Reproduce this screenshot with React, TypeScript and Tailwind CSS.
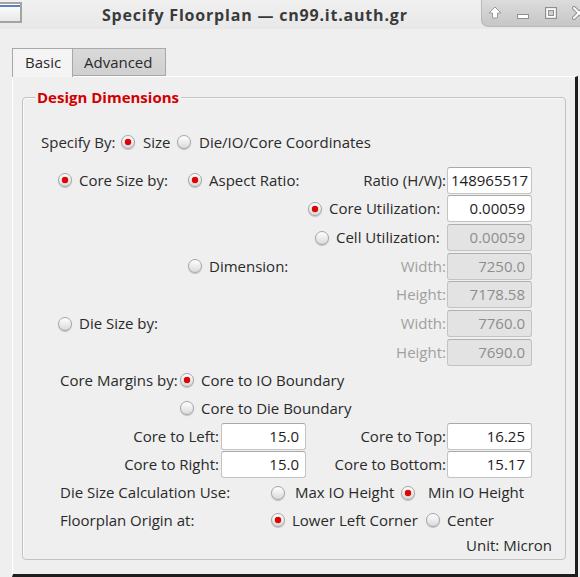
import React from "react";

const Radio = ({ checked = false }: { checked?: boolean }) => (
  <span className="shrink-0 w-[14px] h-[14px] rounded-full border border-[#a5a5a5] bg-gradient-to-b from-[#ffffff] to-[#dadada] shadow-[0_1px_1px_rgba(0,0,0,0.2)] flex items-center justify-center">
    {checked && <span className="w-[6px] h-[6px] rounded-full bg-[#e30000] shadow-[0_0_1px_#900]" />}
  </span>
);

const Input = ({ value, disabled = false }: { value: string; disabled?: boolean }) => (
  <div
    className={
      disabled
        ? "shrink-0 w-[85px] h-[27px] rounded-[3px] border border-[#c3c3c3] border-t-[#b0b0b0] bg-[#e3e3e3] text-[#8e8e8e] text-right pr-[6px] leading-[25px] overflow-hidden whitespace-nowrap"
        : "shrink-0 w-[85px] h-[27px] rounded-[3px] border border-[#c3c3c3] border-t-[#a8a8a8] bg-white text-[#1e1e1e] text-right pr-[6px] leading-[25px] overflow-hidden whitespace-nowrap"
    }
  >
    {value}
  </div>
);

const Row = ({ className = "", children }: { className?: string; children: React.ReactNode }) => (
  <div className={"flex items-center whitespace-nowrap " + className}>{children}</div>
);

export default function App() {
  return (
    <div className="w-[580px] h-[577px] bg-[#efefef] overflow-hidden flex flex-col text-[15px] text-[#2a2a2a] font-['Open_Sans','Noto_Sans',sans-serif]">
      {/* Title bar */}
      <div className="h-[29px] shrink-0 flex items-start bg-gradient-to-b from-[#f0f0f0] to-[#e8e8e8]">
        <div className="mt-[2px] w-[22px] h-[21px] border-[2px] border-[#a3a3a3] border-l-0 bg-gradient-to-b from-[#ffffff] to-[#e8e8e8] flex flex-col">
          <div className="mt-[1px] h-[2px] bg-[#5b80c6]" />
        </div>
        <div className="ml-[80px] mt-[3px] font-bold text-[16px] text-[#3a3a3a] tracking-[0.8px] whitespace-nowrap">
          Specify Floorplan — cn99.it.auth.gr
        </div>
        <div className="flex-1" />
        <div className="w-[99px] h-[27px] shrink-0 rounded-bl-[7px] border-l border-b border-[#b9b9b9] bg-gradient-to-b from-[#dcdcdc] to-[#c6c6c6] flex items-center pl-[6px] gap-[14px]">
          <svg className="shrink-0" width="14" height="14" viewBox="0 0 14 14">
            <path d="M7 1 L13 7 L9.5 7 L9.5 12 L4.5 12 L4.5 7 L1 7 Z" fill="#ffffff" stroke="#9a9a9a" strokeWidth="1" />
          </svg>
          <svg className="shrink-0" width="14" height="14" viewBox="0 0 14 14">
            <rect x="1.5" y="8.5" width="11" height="4" fill="#ffffff" stroke="#8f8f8f" strokeWidth="1" />
          </svg>
          <svg className="shrink-0" width="14" height="14" viewBox="0 0 14 14">
            <rect x="1.5" y="1.5" width="11" height="11" fill="none" stroke="#8f8f8f" strokeWidth="1" />
            <rect x="3.5" y="3.5" width="7" height="7" fill="none" stroke="#ffffff" strokeWidth="2" />
            <rect x="4.5" y="4.5" width="5" height="5" fill="none" stroke="#8f8f8f" strokeWidth="1" />
          </svg>
          <svg className="shrink-0" width="14" height="14" viewBox="0 0 14 14">
            <path d="M2 2 L12 12 M12 2 L2 12" stroke="#8f8f8f" strokeWidth="4" strokeLinecap="round" />
            <path d="M2 2 L12 12 M12 2 L2 12" stroke="#ffffff" strokeWidth="2" strokeLinecap="round" />
          </svg>
        </div>
      </div>

      {/* Tabs */}
      <div className="pl-[12px] pt-[19px] flex items-end h-[47px] shrink-0">
        <div className="h-[29px] w-[61px] border border-b-0 border-[#a8a8a8] bg-[#f4f4f4] pl-[12px] leading-[27px] relative z-10 mb-[-1px]">
          Basic
        </div>
        <div className="h-[28px] w-[93px] border border-l-0 border-[#a8a8a8] bg-gradient-to-b from-[#d9d9d9] to-[#d0d0d0] pl-[11px] leading-[27px]">
          Advanced
        </div>
      </div>

      {/* Panel */}
      <div className="ml-[12px] mr-[2px] flex-1 border-l border-t border-l-white border-t-white border-r-[3px] border-b-[3px] border-r-[#1e1e1e] border-b-[#1e1e1e] pl-[9px] pr-[9px] pt-[20px] pb-[14px] flex flex-col">
        <div className="relative flex-1 rounded-[4px] border border-[#c2c2c2] shadow-[inset_1px_1px_0_#fafafa] pt-[30px] flex flex-col">
          <span className="absolute left-[12px] top-[-11px] px-[2px] bg-[#efefef] text-[#d20000] font-bold text-[15px] leading-[20px]">
            Design Dimensions
          </span>

          {/* Specify By */}
          <Row className="h-[28px] pl-[18px]">
            <span className="w-[80px] shrink-0">Specify By:</span>
            <Radio checked />
            <span className="ml-[8px] w-[34px] shrink-0">Size</span>
            <Radio />
            <span className="ml-[8px]">Die/IO/Core Coordinates</span>
          </Row>

          {/* Core size by */}
          <Row className="h-[28px] mt-[10px] pl-[35px] pr-[33px]">
            <Radio checked />
            <span className="ml-[7px] w-[109px] shrink-0">Core Size by:</span>
            <Radio checked />
            <span className="ml-[7px]">Aspect Ratio:</span>
            <span className="flex-1" />
            <span className="mr-[1px]">Ratio (H/W):</span>
            <div className="shrink-0 w-[85px] h-[27px] rounded-[3px] border border-[#c3c3c3] border-t-[#a8a8a8] bg-white text-[#1e1e1e] pl-[3px] leading-[25px] overflow-hidden whitespace-nowrap">
              148965517
            </div>
          </Row>

          <Row className="h-[29px] pl-[285px] pr-[33px]">
            <Radio checked />
            <span className="ml-[7px]">Core Utilization:</span>
            <span className="flex-1" />
            <Input value="0.00059" />
          </Row>

          <Row className="h-[29px] pl-[292px] pr-[33px]">
            <Radio />
            <span className="ml-[7px]">Cell Utilization:</span>
            <span className="flex-1" />
            <Input value="0.00059" disabled />
          </Row>

          <Row className="h-[28px] pl-[165px] pr-[33px]">
            <Radio />
            <span className="ml-[7px]">Dimension:</span>
            <span className="flex-1" />
            <span className="mr-[1px] text-[#a0a0a0]">Width:</span>
            <Input value="7250.0" disabled />
          </Row>

          <Row className="h-[29px] pr-[33px]">
            <span className="flex-1" />
            <span className="mr-[1px] text-[#a0a0a0]">Height:</span>
            <Input value="7178.58" disabled />
          </Row>

          <Row className="h-[29px] pl-[35px] pr-[33px]">
            <Radio />
            <span className="ml-[7px]">Die Size by:</span>
            <span className="flex-1" />
            <span className="mr-[1px] text-[#a0a0a0]">Width:</span>
            <Input value="7760.0" disabled />
          </Row>

          <Row className="h-[28px] pr-[33px]">
            <span className="flex-1" />
            <span className="mr-[1px] text-[#a0a0a0]">Height:</span>
            <Input value="7690.0" disabled />
          </Row>

          <Row className="h-[28px] pl-[37px]">
            <span className="w-[120px] shrink-0">Core Margins by:</span>
            <Radio checked />
            <span className="ml-[7px]">Core to IO Boundary</span>
          </Row>

          <Row className="h-[28px] pl-[157px]">
            <Radio />
            <span className="ml-[7px]">Core to Die Boundary</span>
          </Row>

          <Row className="h-[28px] pr-[33px]">
            <span className="w-[196px] shrink-0 text-right">Core to Left:</span>
            <span className="ml-[2px]">
              <Input value="15.0" />
            </span>
            <span className="flex-1 text-right mr-[1px]">Core to Top:</span>
            <Input value="16.25" />
          </Row>

          <Row className="h-[29px] pr-[33px]">
            <span className="w-[196px] shrink-0 text-right">Core to Right:</span>
            <span className="ml-[2px]">
              <Input value="15.0" />
            </span>
            <span className="flex-1 text-right mr-[1px]">Core to Bottom:</span>
            <Input value="15.17" />
          </Row>

          <Row className="h-[27px] pl-[37px]">
            <span className="w-[211px] shrink-0">Die Size Calculation Use:</span>
            <Radio />
            <span className="ml-[10px] w-[106px] shrink-0">Max IO Height</span>
            <Radio checked />
            <span className="ml-[13px]">Min IO Height</span>
          </Row>

          <Row className="h-[28px] pl-[37px]">
            <span className="w-[211px] shrink-0">Floorplan Origin at:</span>
            <Radio checked />
            <span className="ml-[7px] w-[134px] shrink-0">Lower Left Corner</span>
            <Radio />
            <span className="ml-[7px]">Center</span>
          </Row>

          <Row className="h-[22px] pr-[13px] justify-end">
            <span>Unit: Micron</span>
          </Row>
        </div>
      </div>
    </div>
  );
}
